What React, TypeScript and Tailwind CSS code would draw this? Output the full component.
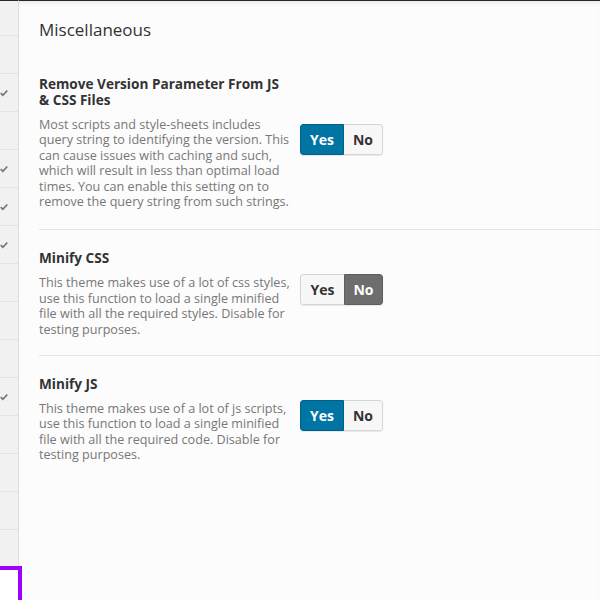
import React from 'react';

interface Setting {
  title: string[];
  description: string[];
  value: boolean;
  toggleOffset: string;
}

const settings: Setting[] = [
  {
    title: ['Remove Version Parameter From JS', '& CSS Files'],
    description: [
      'Most scripts and style-sheets includes',
      'query string to identifying the version. This',
      'can cause issues with caching and such,',
      'which will result in less than optimal load',
      'times. You can enable this setting on to',
      'remove the query string from such strings.',
    ],
    value: true,
    toggleOffset: 'mt-[48px]',
  },
  {
    title: ['Minify CSS'],
    description: [
      'This theme makes use of a lot of css styles,',
      'use this function to load a single minified',
      'file with all the required styles. Disable for',
      'testing purposes.',
    ],
    value: false,
    toggleOffset: 'mt-[24px]',
  },
  {
    title: ['Minify JS'],
    description: [
      'This theme makes use of a lot of js scripts,',
      'use this function to load a single minified',
      'file with all the required code. Disable for',
      'testing purposes.',
    ],
    value: true,
    toggleOffset: 'mt-[24px]',
  },
];

// rows of the side menu, true = checked
const menuRows = [false, true, false, true, true, true, false, false, false, true, false, false, false, false];

function Check() {
  return (
    <svg width="9" height="8" viewBox="0 0 9 8" className="text-[#777]">
      <polyline points="0.8,4.2 3.2,6.6 8.2,1.2" fill="none" stroke="currentColor" strokeWidth="2" />
    </svg>
  );
}

function Toggle({ value, className }: { value: boolean; className: string }) {
  return (
    <div className={`${className} flex h-[31px] w-[83px] shrink-0 rounded-[3px] text-[14px] font-bold overflow-hidden shadow-[0_1px_1px_rgba(0,0,0,0.08)]`}>
      <span
        className={`flex w-[44px] items-center justify-center border rounded-l-[3px] ${
          value
            ? 'bg-[#0074a2] border-[#005f86] text-white'
            : 'bg-[#f7f7f7] border-[#d5d5d5] border-r-0 text-[#333]'
        }`}
      >
        Yes
      </span>
      <span
        className={`flex flex-1 items-center justify-center border rounded-r-[3px] ${
          value
            ? 'bg-[#f7f7f7] border-[#d5d5d5] border-l-0 text-[#333]'
            : 'bg-[#6d6d6d] border-[#5e5e5e] text-white'
        }`}
      >
        No
      </span>
    </div>
  );
}

export default function App() {
  return (
    <div
      className="relative flex h-[600px] w-[600px] overflow-hidden bg-[#fcfcfc]"
      style={{ fontFamily: '"Open Sans", "Noto Sans", sans-serif' }}
    >
      <div className="flex w-[18px] shrink-0 flex-col bg-[#f1f1f1] border-t border-[#23282d]">
        <div className="h-[35px] shrink-0 border-b border-[#e3e3e3]" />
        {menuRows.map((checked, i) => (
          <div key={i} className="flex h-[38px] shrink-0 items-center justify-end pr-[10px] border-b border-[#e3e3e3]">
            {checked && <Check />}
          </div>
        ))}
      </div>
      <div className="flex-1 border-l border-[#e0e0e0] border-t border-t-[#23282d] shadow-[inset_0_4px_4px_-2px_rgba(0,0,0,0.08)]">
        <div className="pl-[20px] pt-[17px]">
          <h2 className="text-[17px] leading-[24px] text-[#333]">Miscellaneous</h2>
          <div className="mt-[34px]">
            {settings.map((s, i) => (
              <div key={i} className={i > 0 ? 'border-t border-[#e5e5e5] pt-[20px]' : ''}>
                <div className={`flex ${i === 0 ? 'pb-[20px]' : 'pb-[18px]'}`}>
                  <div className="w-[261px] shrink-0">
                    <div className="text-[13.6px] font-bold leading-[16px] text-[#333]">
                      {s.title.map((t) => (
                        <div key={t}>{t}</div>
                      ))}
                    </div>
                    <p className="mt-[9px] text-[12.6px] leading-[15.4px] text-[#777]">
                      {s.description.map((d) => (
                        <span key={d} className="block whitespace-nowrap">
                          {d}
                        </span>
                      ))}
                    </p>
                  </div>
                  <Toggle value={s.value} className={s.toggleOffset} />
                </div>
              </div>
            ))}
          </div>
        </div>
      </div>
      <div className="absolute -bottom-[4px] -left-[4px] h-[38px] w-[26px] border-4 border-[#9d00ff] bg-white" />
    </div>
  );
}
